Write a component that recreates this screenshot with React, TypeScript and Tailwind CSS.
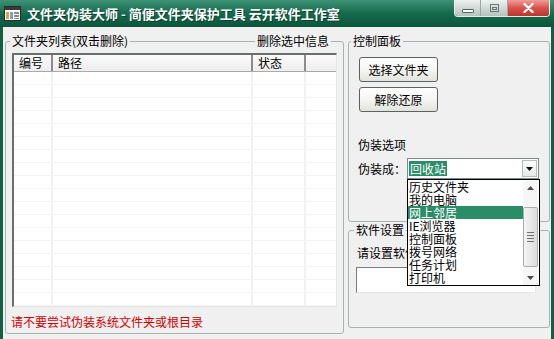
import React from 'react';

const items = ['历史文件夹', '我的电脑', '网上邻居', 'IE浏览器', '控制面板', '拨号网络', '任务计划', '打印机'];
const rows = Array.from({ length: 18 }, (_, i) => i);

function Btn({ label, className = '' }: { label: string; className?: string }) {
  return (
    <div className={`w-[79px] h-[25px] rounded-[3px] border border-[#5b6262] bg-linear-to-b from-[#ffffff] via-[#f5f5f3] to-[#e2e2de] flex items-center justify-center text-[12px] leading-[14px] ${className}`}>
      {label}
    </div>
  );
}

export default function App() {
  return (
    <div className="w-[554px] h-[339px] flex flex-col overflow-hidden bg-[#116043] font-['Noto_Sans_CJK_SC',sans-serif] text-[12px] leading-[14px] text-black">
      {/* Title bar */}
      <div className="h-[27px] shrink-0 flex items-start bg-linear-to-b from-[#3d9275] via-[#156a4c] to-[#0c553c]">
        <svg className="ml-[4px] mt-[6px]" width="17" height="15" viewBox="0 0 17 15">
          <rect x="0.5" y="0.5" width="16" height="14" fill="#ffffff" stroke="#2a2a2a" />
          <rect x="1" y="1" width="15" height="3" fill="#3a3a3a" />
          <rect x="2" y="6" width="3" height="7" fill="#e0a040" />
          <rect x="6" y="6" width="3" height="7" fill="#7aa0d0" />
          <rect x="10" y="6" width="5" height="2" fill="#8a8a8a" />
          <rect x="10" y="9" width="5" height="2" fill="#8a8a8a" />
          <rect x="10" y="12" width="5" height="1" fill="#8a8a8a" />
        </svg>
        <div className="ml-[6px] mt-[6px] text-[13px] leading-[16px] font-bold text-white [text-shadow:1px_1px_0_#0a3e2c]">
          文件夹伪装大师 - 简便文件夹保护工具 云开软件工作室
        </div>
        <div className="ml-auto mr-[4px] flex h-[17px] rounded-b-[4px] border border-t-0 border-[#e8eeec] overflow-hidden">
          <div className="w-[26px] bg-linear-to-b from-[#eef2f0] to-[#b5c2bd] border-r border-[#9aa8a4] flex items-end justify-center pb-[3px]">
            <div className="w-[12px] h-[4px] rounded-[1px] border border-[#55625e] bg-white" />
          </div>
          <div className="w-[27px] bg-linear-to-b from-[#eef2f0] to-[#b5c2bd] border-r border-[#9aa8a4] flex items-center justify-center">
            <div className="w-[9px] h-[8px] border border-[#6a7874] flex items-center justify-center">
              <div className="w-[5px] h-[3px] border border-[#6a7874]" />
            </div>
          </div>
          <div className="w-[41px] bg-linear-to-b from-[#f09c98] via-[#d8524c] to-[#b93530] flex items-center justify-center">
            <svg width="11" height="10" viewBox="0 0 11 10">
              <path d="M1.5 1 L9.5 9 M9.5 1 L1.5 9" stroke="#ffffff" strokeWidth="2.4" strokeLinecap="round" />
            </svg>
          </div>
        </div>
      </div>

      {/* Body with frame */}
      <div className="flex-1 flex px-[3px]">
        <div className="flex-1 bg-[#f0f0f0] flex items-start pl-[2px] pt-[14px]">
          {/* Left group */}
          <div className="relative w-[339px] h-[293px] shrink-0 border border-[#a7b2b2] rounded-[3px] pl-[6px] pt-[11px]">
            <span className="absolute left-[4px] top-[-8px] px-[2px] bg-[#f0f0f0]">文件夹列表(双击删除)</span>
            <span className="absolute left-[249px] top-[-8px] px-[2px] bg-[#f0f0f0]">删除选中信息</span>
            <div className="w-[325px] h-[254px] bg-white border-t-2 border-l-2 border-r border-b border-t-[#6a6e6e] border-l-[#6a6e6e] border-r-[#e4e4e4] border-b-[#e4e4e4] flex flex-col overflow-hidden">
              <div className="h-[17px] shrink-0 flex bg-linear-to-b from-[#fafafa] to-[#eeeeee] border-b border-[#a9a9a9]">
                <div className="w-[39px] border-r-2 border-[#8c8c8c] pl-[5px] leading-[16px]">编号</div>
                <div className="w-[200px] border-r-2 border-[#8c8c8c] pl-[5px] leading-[16px]">路径</div>
                <div className="w-[53px] border-r-2 border-[#8c8c8c] pl-[5px] leading-[16px]">状态</div>
                <div className="flex-1" />
              </div>
              <div className="flex-1 flex flex-col">
                {rows.map((r) => (
                  <div key={r} className="h-[13px] shrink-0 flex border-b border-[#f4f4f4]">
                    <div className="w-[39px] border-r-2 border-[#f2f2f2]" />
                    <div className="w-[200px] border-r-2 border-[#f2f2f2]" />
                    <div className="w-[53px] border-r-2 border-[#f2f2f2]" />
                    <div className="flex-1" />
                  </div>
                ))}
              </div>
            </div>
            <div className="mt-[8px] ml-[-1px] text-[#d10000]">请不要尝试伪装系统文件夹或根目录</div>
          </div>

          {/* Right column */}
          <div className="ml-[4px] w-[202px] shrink-0 flex flex-col">
            <div className="relative h-[181px] border border-[#a7b2b2] rounded-[3px] pl-[10px] pt-[15px] flex flex-col items-start">
              <span className="absolute left-[2px] top-[-8px] px-[2px] bg-[#f0f0f0]">控制面板</span>
              <Btn label="选择文件夹" />
              <Btn label="解除还原" className="mt-[5px]" />
              <div className="mt-[26px] ml-[-1px]">伪装选项</div>
              <div className="mt-[6px] ml-[-1px] flex items-center">
                <div className="w-[49px]">伪装成：</div>
                <div className="relative w-[132px] h-[21px] border border-[#7d8a8a] bg-white flex items-center">
                  <div className="flex-1 pl-[1px] flex items-center">
                    <span className="h-[15px] px-[1px] bg-[#2a8d68] text-white leading-[15px]">回收站</span>
                  </div>
                  <div className="w-[15px] h-[17px] mr-[1px] border border-[#b5bcbc] bg-linear-to-b from-[#ffffff] to-[#e6e8e8] flex items-center justify-center">
                    <svg width="7" height="4" viewBox="0 0 7 4"><path d="M0 0 H7 L3.5 4 Z" fill="#111" /></svg>
                  </div>
                  {/* Dropdown list */}
                  <div className="absolute left-[-1px] top-[20px] w-[133px] h-[107px] border border-black bg-white z-10 flex">
                    <div className="flex-1 flex flex-col">
                      {items.map((it, i) => (
                        <div key={it} className={`h-[13px] leading-[13px] pl-[1px] text-[12px] ${i === 2 ? 'bg-[#2a8d68] text-white' : 'text-black'}`}>
                          {it}
                        </div>
                      ))}
                    </div>
                    <div className="w-[15px] mr-[1px] bg-[#f6f6f6] flex flex-col">
                      <div className="h-[15px] flex items-center justify-center">
                        <svg width="7" height="4" viewBox="0 0 7 4"><path d="M0 4 H7 L3.5 0 Z" fill="#4a4a4a" /></svg>
                      </div>
                      <div className="flex-1 flex flex-col">
                        <div className="mt-[12px] h-[60px] rounded-[2px] border border-[#a8aeae] bg-linear-to-r from-[#f4f4f4] to-[#dcdcdc] flex flex-col items-center justify-center gap-[2px]">
                          <div className="w-[7px] h-px bg-[#6f6f6f]" />
                          <div className="w-[7px] h-px bg-[#6f6f6f]" />
                          <div className="w-[7px] h-px bg-[#6f6f6f]" />
                          <div className="w-[7px] h-px bg-[#6f6f6f]" />
                        </div>
                      </div>
                      <div className="h-[15px] flex items-center justify-center">
                        <svg width="7" height="4" viewBox="0 0 7 4"><path d="M0 0 H7 L3.5 4 Z" fill="#4a4a4a" /></svg>
                      </div>
                    </div>
                  </div>
                </div>
              </div>
            </div>

            <div className="relative mt-[8px] h-[98px] border border-[#a7b2b2] rounded-[3px] pl-[8px] pt-[15px] flex flex-col items-start">
              <span className="absolute left-[5px] top-[-8px] px-[2px] bg-[#f0f0f0]">软件设置</span>
              <div>请设置软件密码</div>
              <div className="mt-[7px] ml-[-1px] w-[180px] h-[26px] bg-white border-t border-l border-r border-b border-t-[#7c7c7c] border-l-[#7c7c7c] border-r-[#e6e6e6] border-b-[#e6e6e6]" />
            </div>
          </div>
        </div>
      </div>
    </div>
  );
}
